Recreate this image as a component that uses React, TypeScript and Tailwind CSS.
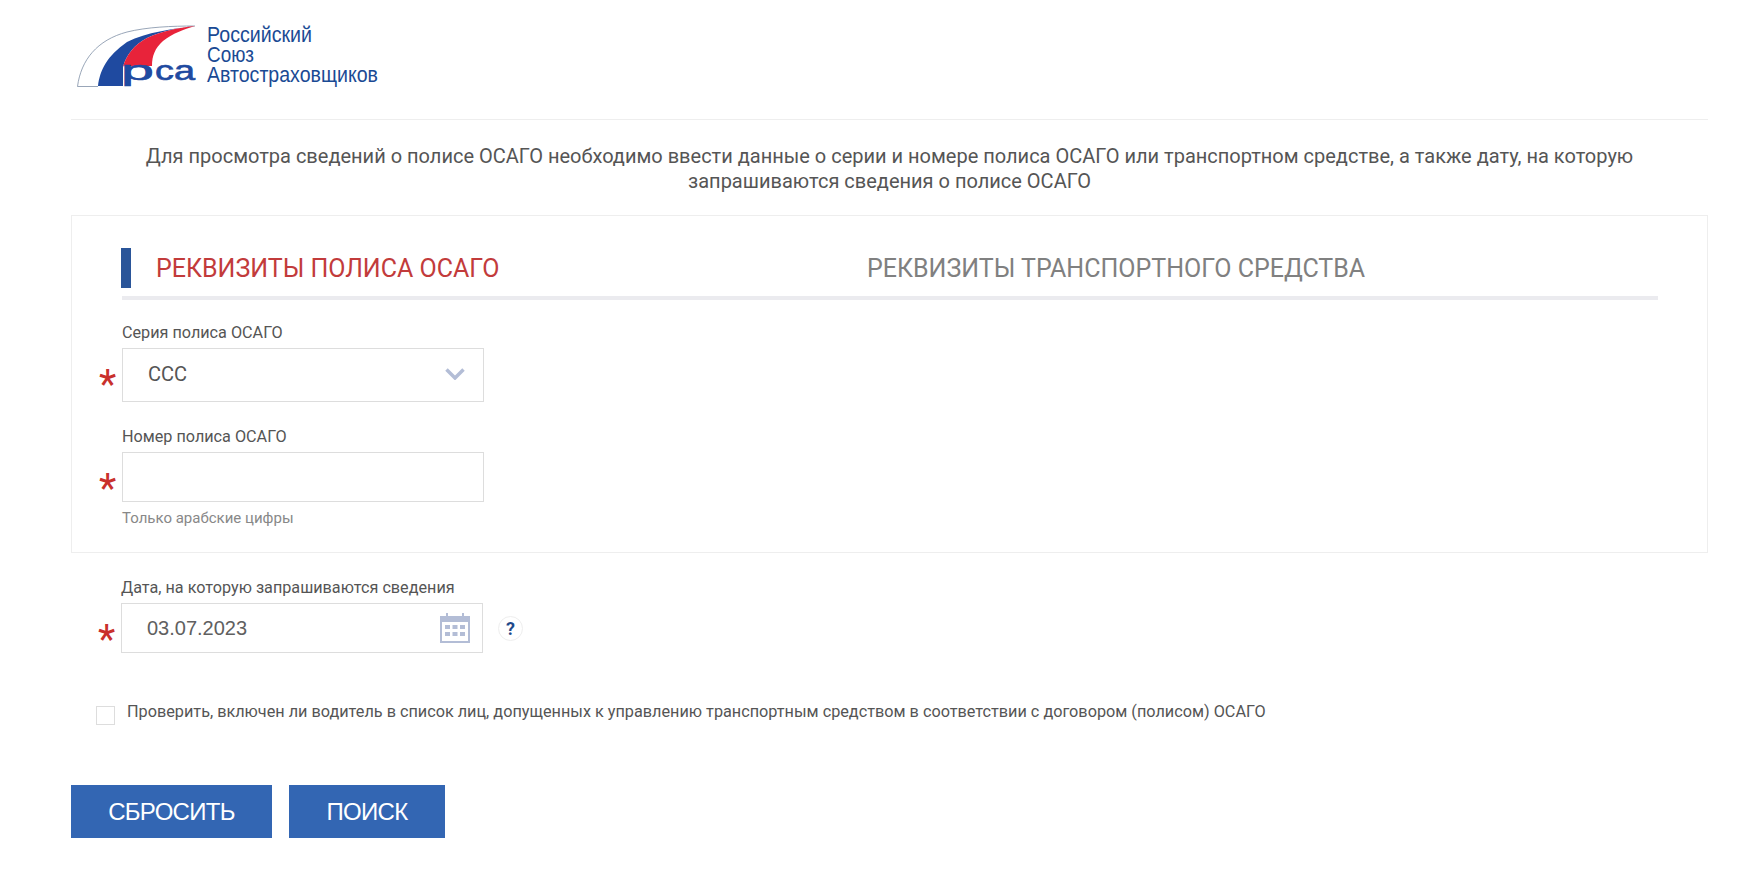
import React from 'react';

const Star = () => (
  <span className="absolute left-[-24px] top-[8px] font-['Roboto',sans-serif] text-[40px] leading-[56px] text-[#c9302c]">*</span>
);

const Logo = () => (
  <svg width="320" height="74" viewBox="0 0 320 74" className="block">
    {/* thin outline arc */}
    <path d="M0.5 66.5 C4 40 20 20 50 12 C70 7 95 6 118 6 M0.5 66.5 H21" fill="none" stroke="#7f8fa6" strokeWidth="0.8" />
    {/* blue band */}
    <path d="M21 66 C23 50 30 36 50 22 C70 12 95 9 118 6 C100 8 85 11 70 18 C57 25 49 35 46 47 V66 Z" fill="#1f4aa0" />
    {/* red band */}
    <path d="M46 47 C49 35 57 25 70 18 C85 11 100 8 118 6 C108 9 96 13 86 21 C78 28 75 36 75 46 H46 Z" fill="#e8233a" />
    <g fontFamily="'Liberation Sans', sans-serif" fontSize="27" fill="#1f4aa0" stroke="#1f4aa0" strokeWidth="0.6">
      <text x="44" y="60" textLength="33" lengthAdjust="spacingAndGlyphs">р</text>
      <text x="78" y="60" textLength="40" lengthAdjust="spacingAndGlyphs">са</text>
    </g>
    <g fontFamily="'Liberation Sans', sans-serif" fontSize="22" fill="#1a4a94">
      <text x="130" y="22" textLength="105" lengthAdjust="spacingAndGlyphs">Российский</text>
      <text x="130" y="42" textLength="47" lengthAdjust="spacingAndGlyphs">Союз</text>
      <text x="130" y="62" textLength="171" lengthAdjust="spacingAndGlyphs">Автостраховщиков</text>
    </g>
  </svg>
);

const CalendarIcon = () => (
  <svg width="30" height="30" viewBox="0 0 30 30" fill="#b3bdd6">
    <path d="M0 3h6V0h2v3h14V0h2v3h6v27H0Z M2 9v19h26V9Z" fillRule="evenodd" />
    <rect x="5" y="12" width="5" height="4" />
    <rect x="12.5" y="12" width="5" height="4" />
    <rect x="20" y="12" width="5" height="4" />
    <rect x="5" y="19" width="5" height="4" />
    <rect x="12.5" y="19" width="5" height="4" />
    <rect x="20" y="19" width="5" height="4" />
  </svg>
);

const App: React.FC = () => {
  return (
    <div className="h-[872px] overflow-hidden bg-white pl-[71px] pr-[37px] font-['Roboto',sans-serif] text-[#555]">
      {/* Header */}
      <div className="h-[120px] border-b border-[#eee] pl-[6px] pt-[20px]">
        <Logo />
      </div>

      <p className="mx-auto mt-[24px] h-[71px] w-[1500px] text-center text-[20px] leading-[24.5px] text-[#555]">
        Для просмотра сведений о полисе ОСАГО необходимо ввести данные о серии и номере полиса ОСАГО или транспортном средстве, а также дату, на которую запрашиваются сведения о полисе ОСАГО
      </p>

      {/* Card */}
      <div className="h-[338px] w-[1637px] border border-[#eee] pl-[50px] pr-[50px] pt-[32px]">
        <div className="flex h-[52px] w-[1536px] border-b-[4px] border-[#ebebef]">
          <div className="ml-[-1px] h-[40px] w-[10px] bg-[#2a5599]" />
          <div className="ml-[25px] w-[711px] text-[25px] leading-[42px] text-[#c23b3b]">РЕКВИЗИТЫ ПОЛИСА ОСАГО</div>
          <div className="text-[25px] leading-[42px] text-[#808080]">РЕКВИЗИТЫ ТРАНСПОРТНОГО СРЕДСТВА</div>
        </div>

        <label className="mt-[23px] block text-[16.2px] leading-[20px] text-[#555]">Серия полиса ОСАГО</label>
        <div className="relative mt-[5px] flex h-[54px] w-[362px] items-center justify-between border border-[#ddd] pb-[2px] pl-[25px] pr-[18px] text-[20px]">
          <Star />
          <span>ССС</span>
          <svg width="20" height="12" viewBox="0 0 20 12" fill="none" stroke="#b3bdd6" strokeWidth="3.5">
            <path d="M1.5 1.5 10 10l8.5-8.5" />
          </svg>
        </div>

        <label className="mt-[25px] block text-[16.2px] leading-[20px] text-[#555]">Номер полиса ОСАГО</label>
        <div className="relative mt-[5px] h-[50px] w-[362px] border border-[#ddd]">
          <Star />
        </div>
        <div className="mt-[6px] text-[15px] leading-[20px] text-[#888]">Только арабские цифры</div>
      </div>

      {/* Date */}
      <div className="ml-[50px] mt-[25px] text-[16.2px] leading-[20px] text-[#555]">Дата, на которую запрашиваются сведения</div>
      <div className="ml-[50px] mt-[5px] flex items-center">
        <div className="relative flex h-[50px] w-[362px] items-center justify-between border border-[#ddd] pl-[25px] pr-[12px] font-['Liberation_Sans',sans-serif] text-[20px] text-[#606060]">
          <Star />
          <span>03.07.2023</span>
          <CalendarIcon />
        </div>
        <div className="ml-[15px] flex h-[25px] w-[25px] items-center justify-center rounded-full border border-[#eee] text-[18px] font-bold text-[#1f4a8c]">?</div>
      </div>

      {/* Checkbox */}
      <div className="ml-[25px] mt-[49px] flex items-start">
        <div className="mt-[4px] h-[19px] w-[19px] border border-[#ddd]" />
        <span className="ml-[12px] text-[16.24px] leading-[20px] text-[#555]">
          Проверить, включен ли водитель в список лиц, допущенных к управлению транспортным средством в соответствии с договором (полисом) ОСАГО
        </span>
      </div>

      {/* Buttons */}
      <div className="mt-[60px] flex gap-[17px] font-['Liberation_Sans',sans-serif] text-[24px] tracking-[-0.7px] text-white">
        <button className="h-[53px] w-[201px] bg-[#3366b3]">СБРОСИТЬ</button>
        <button className="h-[53px] w-[156px] bg-[#3366b3]">ПОИСК</button>
      </div>
    </div>
  );
};

export default App;
